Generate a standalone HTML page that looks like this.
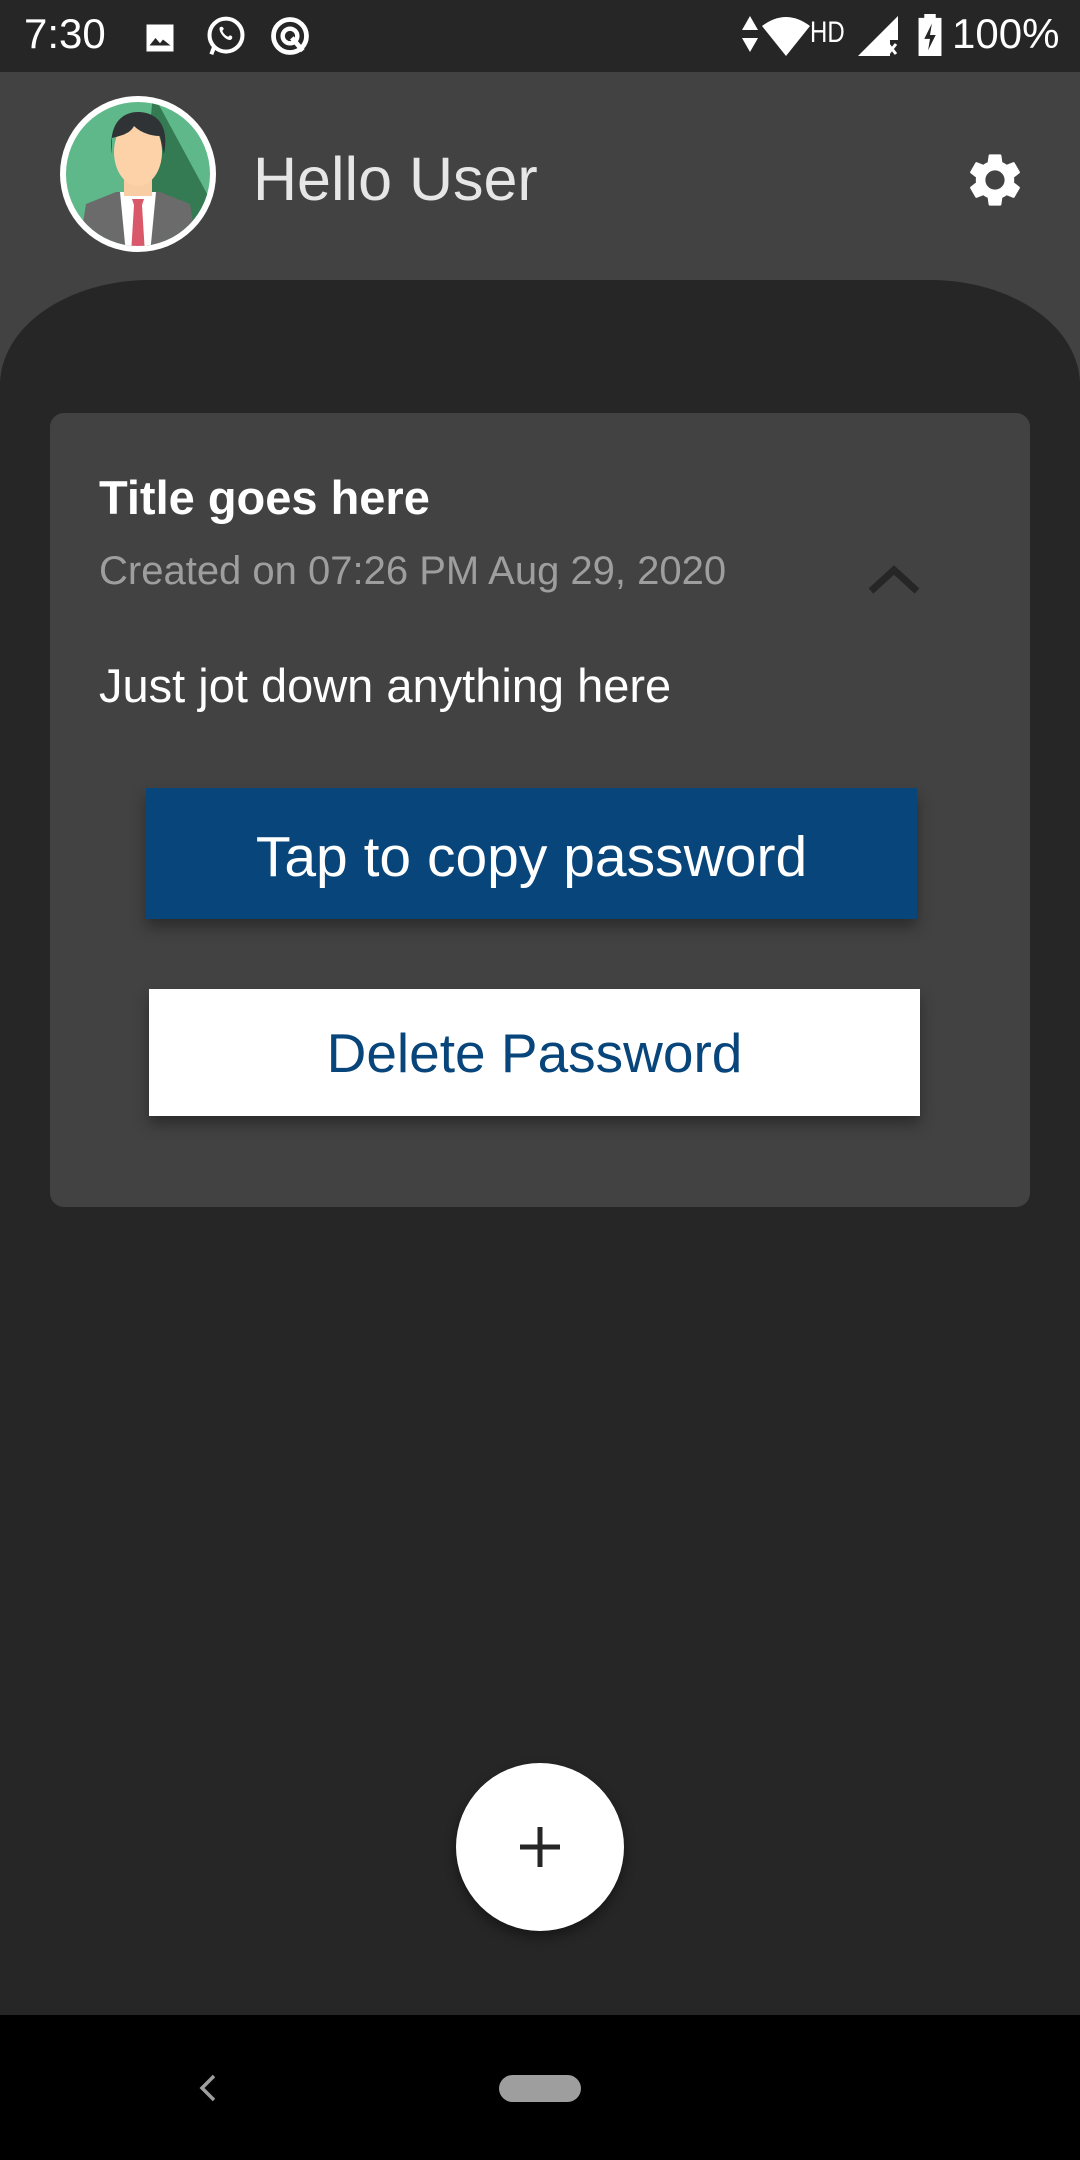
<!DOCTYPE html>
<html><head><meta charset="utf-8"><style>
*{margin:0;padding:0;box-sizing:border-box}
body{width:1080px;height:2160px;background:#262626;position:relative;overflow:hidden;font-family:"Liberation Sans",sans-serif}
.abs{position:absolute}
.status{left:0;top:0;width:1080px;height:72px;background:#262626;color:#fff}
.header{left:0;top:72px;width:1080px;height:450px;background:#424242}
.panel{left:0;top:280px;width:1080px;height:1800px;background:#262626;border-radius:150px 150px 0 0/105px 105px 0 0}
.card{left:50px;top:413px;width:980px;height:794px;background:#424242;border-radius:14px}
.txt{white-space:nowrap}
.btn{display:flex;align-items:center;justify-content:center;font-size:57px;box-shadow:0 8px 14px rgba(0,0,0,.35)}
</style></head><body>
<div class="abs status">
  <div class="abs txt" style="left:24px;top:10px;font-size:42px">7:30</div>
  <svg class="abs" style="left:142px;top:20px" width="36" height="36" viewBox="0 0 24 24"><path fill="#fff" d="M3 3h18v18H3z"/><path fill="#262626" d="M5 17l4-5 3 3.5 2-2.5 5 4z"/></svg>
  <svg class="abs" style="left:204px;top:14px" width="44" height="44" viewBox="0 0 24 24"><circle cx="12" cy="11.5" r="9" fill="none" stroke="#fff" stroke-width="2.2"/><path d="M4 22l1.5-4" stroke="#fff" stroke-width="2.2"/><path fill="#fff" d="M8.5 7.5c1-1 2-.5 2.3.7l-.8 1c.7 1.6 1.6 2.5 3.2 3.2l1-.8c1.2.3 1.7 1.3.7 2.3-2 1.5-7-3.5-6.4-6.4z"/></svg>
  <svg class="abs" style="left:268px;top:14px" width="44" height="44" viewBox="0 0 24 24"><circle cx="12" cy="12" r="9" fill="none" stroke="#fff" stroke-width="2.6"/><circle cx="12" cy="12" r="4" fill="none" stroke="#fff" stroke-width="2.4"/><path d="M13 13l6 7" stroke="#fff" stroke-width="2.6"/></svg>
  <svg class="abs" style="left:740px;top:16px" width="20" height="36" viewBox="0 0 10 18"><path fill="#fff" d="M5 0l4 7H1zM5 18l4-7H1z"/></svg>
  <svg class="abs" style="left:762px;top:16px" width="48" height="40" viewBox="0 0 24 20"><path fill="#fff" d="M0 5Q12-4 24 5L12 20z"/></svg>
  <div class="abs txt" style="left:810px;top:16px;font-size:30px;transform:scaleX(.8);transform-origin:left">HD</div>
  <svg class="abs" style="left:858px;top:16px" width="40" height="40" viewBox="0 0 20 20"><path fill="#fff" d="M20 0v12h-4v8H0z"/><path d="M15 14l4 5M19 14l-4 5" stroke="#fff" stroke-width="1.5"/></svg>
  <svg class="abs" style="left:918px;top:14px" width="24" height="42" viewBox="0 0 12 22"><path fill="#fff" d="M3 0h6v2h3v20H0V2h3z"/><path fill="#262626" d="M7 5l-4 8h3l-1 6 4-8H6z"/></svg>
  <div class="abs txt" style="left:952px;top:10px;font-size:42px">100%</div>
</div>
<div class="abs header"></div>
<div class="abs panel"></div>
<svg class="abs" style="left:58px;top:94px" width="160" height="160" viewBox="0 0 160 160">
  <defs><clipPath id="c"><circle cx="80" cy="80" r="72"/></clipPath></defs>
  <circle cx="80" cy="80" r="78" fill="#fff"/>
  <g clip-path="url(#c)">
    <rect width="160" height="160" fill="#5fb889"/>
    <path d="M95 0L160 120V160H80z" fill="#347a52"/>
    <path d="M20 160l8-50 30-12h44l30 12 8 50z" fill="#6b6b6b"/>
    <path d="M62 98h36l-6 62H68z" fill="#fff"/>
    <path d="M74 105h12l-2 6 3 49H73l3-49z" fill="#d9596a"/>
    <rect x="66" y="70" width="28" height="32" fill="#f9cda4"/>
    <ellipse cx="80" cy="58" rx="24" ry="34" fill="#fdd2a9"/>
    <path d="M54 60c-4-30 10-42 26-42s32 10 26 42l-4-18c-10 0-20-4-26-10-4 8-14 10-22 12z" fill="#2f3336"/>
  </g>
</svg>
<div class="abs txt" style="left:253px;top:144px;font-size:61px;color:#e6e6e6">Hello User</div>
<svg class="abs" style="left:963px;top:148px" width="64" height="64" viewBox="0 0 24 24"><path fill="#fff" d="M19.14 12.94c.04-.3.06-.61.06-.94 0-.32-.02-.64-.07-.94l2.030-1.58a.49.49 0 00.12-.61l-1.92-3.32a.488.488 0 00-.59-.22l-2.39.96c-.5-.38-1.03-.7-1.62-.94l-.36-2.54a.484.484 0 00-.48-.41h-3.84c-.24 0-.43.17-.47.41l-.36 2.540c-.59.24-1.13.57-1.62.94l-2.39-.96c-.22-.08-.47 0-.59.22L2.74 8.87c-.12.21-.08.47.12.61l2.03 1.58c-.05.3-.09.63-.09.94s.02.64.07.94l-2.03 1.58a.49.49 0 00-.12.61l1.92 3.32c.12.22.37.29.59.22l2.39-.96c.5.38 1.03.7 1.62.94l.36 2.54c.05.24.24.41.48.41h3.84c.24 0 .44-.17.47-.41l.36-2.54c.59-.24 1.13-.56 1.62-.94l2.39.96c.22.08.47 0 .59-.22l1.92-3.32c.12-.22.07-.47-.12-.61l-2.01-1.58zM12 15.6c-1.98 0-3.6-1.62-3.6-3.6s1.62-3.6 3.6-3.6 3.6 1.62 3.6 3.6-1.62 3.6-3.6 3.6z"/></svg>
<div class="abs card">
  <div class="abs txt" style="left:49px;top:57px;font-size:47px;font-weight:bold;color:#fff">Title goes here</div>
  <div class="abs txt" style="left:49px;top:136px;font-size:40px;color:#9e9e9e">Created on 07:26 PM Aug 29, 2020</div>
  <svg class="abs" style="left:817px;top:150px" width="54" height="32" viewBox="0 0 54 32"><path d="M4 28L27 7l23 21" fill="none" stroke="#262626" stroke-width="7"/></svg>
  <div class="abs txt" style="left:49px;top:245px;font-size:47px;color:#fff">Just jot down anything here</div>
  <div class="abs btn" style="left:96px;top:375px;width:771px;height:131px;background:#07457a;color:#fff;padding-top:6px">Tap to copy password</div>
  <div class="abs btn" style="left:99px;top:576px;width:771px;height:127px;background:#fff;color:#07457a;font-size:55px">Delete Password</div>
</div>
<div class="abs" style="left:456px;top:1763px;width:168px;height:168px;border-radius:50%;background:#fff;box-shadow:0 6px 12px rgba(0,0,0,.4)"></div>
<svg class="abs" style="left:516px;top:1823px" width="48" height="48" viewBox="0 0 48 48"><path d="M24 4v40M4 24h40" stroke="#262626" stroke-width="5"/></svg>
<div class="abs" style="left:0;top:2015px;width:1080px;height:145px;background:#000"></div>
<svg class="abs" style="left:196px;top:2072px" width="24" height="32" viewBox="0 0 24 32"><path d="M18 4L6 16l12 12" fill="none" stroke="#9e9e9e" stroke-width="3.5"/></svg>
<div class="abs" style="left:499px;top:2075px;width:82px;height:27px;border-radius:14px;background:#9e9e9e"></div>
</body></html>
